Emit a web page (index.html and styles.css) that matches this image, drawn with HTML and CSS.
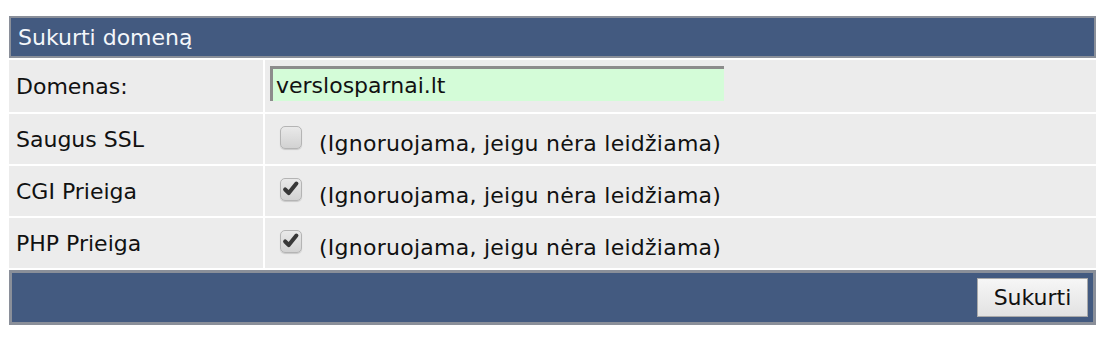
FILE: index.html
```html
<!DOCTYPE html>
<html>
<head>
<meta charset="utf-8">
<link rel="stylesheet" href="styles.css">
</head>
<body>
<div class="panel">
  <div class="head">Sukurti domeną</div>
  <div class="rows">
    <div class="label">Domenas:</div>
    <div class="value"><div class="input">verslosparnai.lt</div></div>
    <div class="label">Saugus SSL</div>
    <div class="value"><span class="check"></span><span class="note">(Ignoruojama, jeigu nėra leidžiama)</span></div>
    <div class="label">CGI Prieiga</div>
    <div class="value"><span class="check"><svg viewBox="0 0 20 20" width="18" height="18"><path d="M3.5 10.5 L7.5 14.5 L16 4" fill="none" stroke="#383838" stroke-width="4.5" stroke-linecap="round" stroke-linejoin="round"/></svg></span><span class="note">(Ignoruojama, jeigu nėra leidžiama)</span></div>
    <div class="label">PHP Prieiga</div>
    <div class="value"><span class="check"><svg viewBox="0 0 20 20" width="18" height="18"><path d="M3.5 10.5 L7.5 14.5 L16 4" fill="none" stroke="#383838" stroke-width="4.5" stroke-linecap="round" stroke-linejoin="round"/></svg></span><span class="note">(Ignoruojama, jeigu nėra leidžiama)</span></div>
  </div>
  <div class="foot"><button class="btn">Sukurti</button></div>
</div>
</body>
</html>
```
FILE: styles.css
```css
html, body {
  margin: 0;
  padding: 0;
  background: #ffffff;
}
body {
  font-family: "DejaVu Sans", Verdana, sans-serif;
  font-size: 22px;
  color: #111;
}
.panel {
  width: 1087px;
  margin: 16px 0 0 9px;
}
.head {
  box-sizing: border-box;
  height: 42px;
  background: #435a80;
  border: 2px solid #8a8f99;
  color: #f4f6fa;
  padding: 0 0 0 7px;
  display: flex;
  align-items: center;
}
.rows {
  display: grid;
  grid-template-columns: 254px 1fr;
  grid-template-rows: 52px 50px 50px 50px;
  gap: 2px;
  margin-top: 2px;
}
.label, .value {
  background: #ececec;
  display: flex;
  align-items: center;
}
.label {
  padding-left: 7px;
}
.value {
  padding-left: 5px;
}
.input {
  box-sizing: border-box;
  width: 454px;
  height: 35px;
  margin-top: -6px;
  background: #d4fcd8;
  border-top: 3px solid #8c8c8c;
  border-left: 3px solid #8c8c8c;
  padding: 2px 0 0 3px;
  display: flex;
  align-items: center;
}
.check {
  box-sizing: border-box;
  width: 22px;
  height: 23px;
  margin: -4px 0 0 10px;
  border: 1px solid #b4b4b4;
  border-radius: 5px;
  background: linear-gradient(#e9e9e9, #d2d2d2);
  box-shadow: 0 1px 1px rgba(0,0,0,0.15);
  display: flex;
  align-items: center;
  justify-content: center;
}
.note {
  margin-left: 17px;
  padding-top: 8px;
  letter-spacing: 0.25px;
}
.foot {
  box-sizing: border-box;
  height: 55px;
  margin-top: 2px;
  background: #435a80;
  border: 3px solid #8a8f99;
  display: flex;
  justify-content: flex-end;
  align-items: center;
  padding-right: 5px;
}
.btn {
  box-sizing: border-box;
  width: 111px;
  height: 39px;
  font-family: "DejaVu Sans", Verdana, sans-serif;
  font-size: 22px;
  color: #111;
  background: linear-gradient(#f6f6f6, #e2e2e2);
  border: 1px solid #a9a9a9;
  border-radius: 0;
  padding: 0;
}
```
